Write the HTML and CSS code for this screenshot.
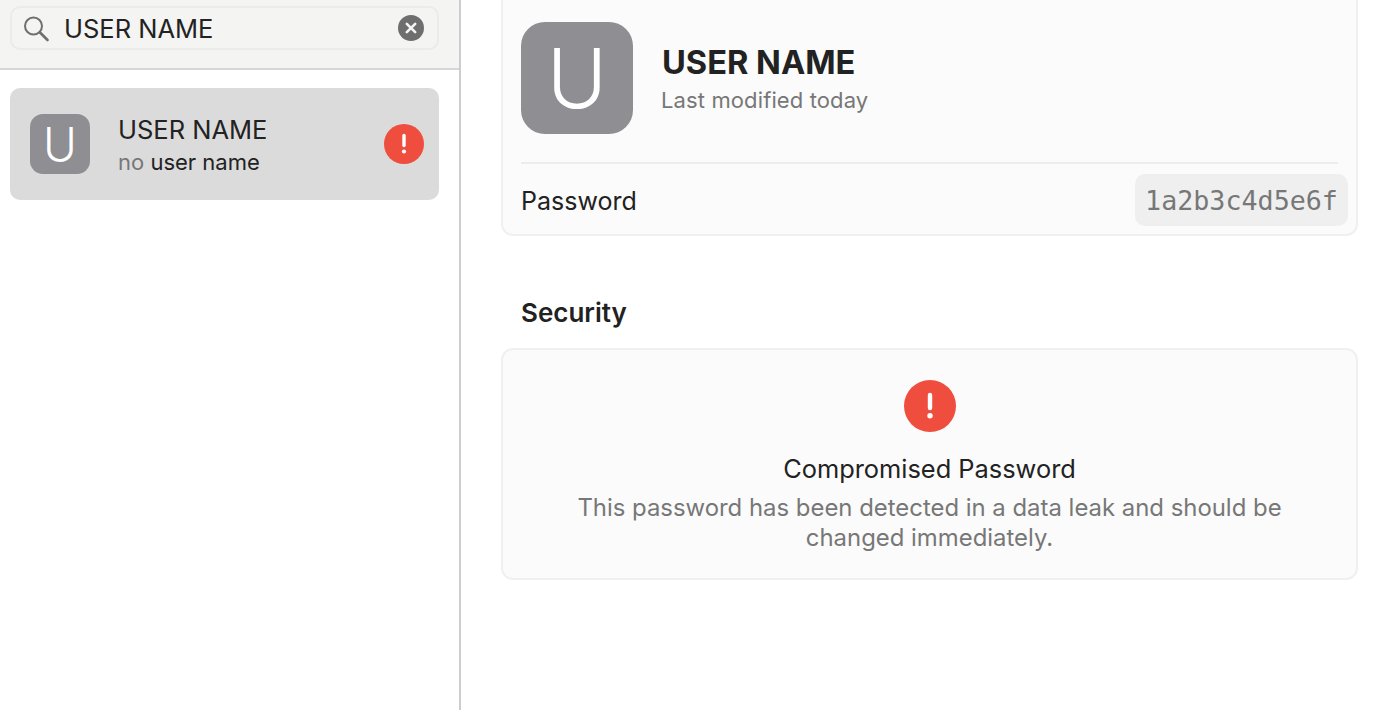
FILE: index.html
```html
<!DOCTYPE html>
<html lang="en">
<head>
  <meta charset="UTF-8" />
  <title>Passwords</title>
  <link rel="stylesheet" href="styles.css">
</head>
<body>
  <div class="app">
    <aside class="sidebar">
      <div class="search-bar">
        <div class="search-field">
          <svg class="search-icon" width="28" height="28" viewBox="0 0 28 28" fill="none" stroke="#6f6f6f" stroke-width="2">
            <circle cx="9.5" cy="12" r="8.5"/>
            <path d="M16 18.5l7.5 7.5" stroke-width="2.6" stroke-linecap="round"/>
          </svg>
          <span class="search-text">USER NAME</span>
          <svg class="clear-icon" width="26" height="26" viewBox="0 0 26 26">
            <circle cx="13" cy="13" r="13" fill="#6e6e6e"/>
            <path d="M8.8 8.8l8.4 8.4M17.2 8.8l-8.4 8.4" stroke="#f4f4f2" stroke-width="2.6" stroke-linecap="round"/>
          </svg>
        </div>
      </div>
      <div class="list">
        <div class="list-item">
          <div class="avatar avatar-small">U</div>
          <div class="item-text">
            <div class="item-title">USER NAME</div>
            <div class="item-sub"><span class="muted">no</span> user name</div>
          </div>
          <svg class="alert alert-small" viewBox="0 0 40 40">
            <circle cx="20" cy="20" r="20" fill="#ef4d3d"/>
            <path d="M20 11.5v10" stroke="#fff" stroke-width="3.4" stroke-linecap="round"/>
            <circle cx="20" cy="27.5" r="2.1" fill="#fff"/>
          </svg>
        </div>
      </div>
    </aside>
    <main class="detail">
      <section class="card card-top">
        <div class="head">
          <div class="avatar avatar-large">U</div>
          <div class="head-text">
            <h1>USER NAME</h1>
            <div class="modified">Last modified today</div>
          </div>
        </div>
        <div class="row">
          <span>Password</span>
          <code class="secret">1a2b3c4d5e6f</code>
        </div>
      </section>
      <h2>Security</h2>
      <section class="card card-security">
        <svg class="alert alert-large" viewBox="0 0 40 40">
          <circle cx="20" cy="20" r="20" fill="#ef4d3d"/>
          <path d="M20 11.5v10" stroke="#fff" stroke-width="3.4" stroke-linecap="round"/>
          <circle cx="20" cy="27.5" r="2.1" fill="#fff"/>
        </svg>
        <div class="sec-title">Compromised Password</div>
        <p>This password has been detected in a data leak and should be changed immediately.</p>
      </section>
    </main>
  </div>
</body>
</html>
```

FILE: styles.css
```css
html, body {
  margin: 0;
  height: 100%;
  overflow: hidden;
}

body {
  font-family: 'Inter', 'Noto Sans', sans-serif;
  background: #fff;
  color: #222;
}

.app {
  display: flex;
  height: 710px;
}

.sidebar {
  width: 459px;
  flex: none;
  border-right: 2px solid #cdcdcd;
}

.search-bar {
  height: 62px;
  background: #f4f4f2;
  border-bottom: 2px solid #d6d6d6;
  padding: 6px 20px 0 10px;
}

.search-field {
  height: 44px;
  box-sizing: border-box;
  border: 2px solid #ebebe9;
  border-radius: 10px;
  display: flex;
  align-items: center;
  padding: 0 13px 0 12px;
}

.search-icon {
  flex: none;
}

.search-text {
  flex: 1;
  margin-left: 12px;
  padding-top: 1px;
  font-size: 25.5px;
}

.list {
  padding: 18px 20px 0 10px;
}

.list-item {
  height: 112px;
  background: #dbdbdb;
  border-radius: 10px;
  display: flex;
  align-items: center;
  padding: 0 15px 0 20px;
}

.avatar {
  flex: none;
  background: #8e8e93;
  color: #fff;
  font-weight: 300;
  display: flex;
  align-items: center;
  justify-content: center;
}

.avatar-small {
  width: 60px;
  height: 60px;
  border-radius: 13px;
  font-size: 46px;
}

.avatar-large {
  width: 112px;
  height: 112px;
  border-radius: 24px;
  font-size: 82px;
}

.item-text {
  flex: 1;
  margin-left: 28px;
  padding-top: 2px;
}

.item-title {
  font-size: 25.5px;
  line-height: 32px;
}

.item-sub {
  font-size: 22px;
  line-height: 28px;
  margin-top: 2px;
}

.muted {
  color: #777;
}

.alert {
  flex: none;
  display: block;
}

.alert-small {
  width: 40px;
  height: 40px;
}

.alert-large {
  width: 52px;
  height: 52px;
}

.detail {
  flex: 1;
  padding: 0 20px 0 40px;
}

.card {
  background: #fbfbfb;
  border: 2px solid #f0f0f0;
  border-radius: 12px;
  box-sizing: border-box;
}

.card-top {
  height: 236px;
  border-top: 0;
  border-top-left-radius: 0;
  border-top-right-radius: 0;
  padding: 22px 8px 0 18px;
}

.head {
  display: flex;
  align-items: center;
  gap: 28px;
  padding-bottom: 28px;
  margin-right: 10px;
  border-bottom: 2px solid #ededed;
}

.head-text {
  padding-bottom: 1px;
}

h1 {
  margin: 0 0 0 1px;
  font-size: 32.6px;
  line-height: 40px;
  font-weight: 700;
}

.modified {
  font-size: 22px;
  letter-spacing: 0.12px;
  line-height: 28px;
  color: #777;
  margin-top: 4px;
}

.row {
  display: flex;
  align-items: center;
  justify-content: space-between;
  font-size: 25px;
  margin-top: 10px;
}

.row span {
  padding-top: 2px;
}

.secret {
  background: #efefef;
  border-radius: 10px;
  height: 52px;
  width: 213px;
  box-sizing: border-box;
  display: flex;
  align-items: center;
  justify-content: center;
  font-family: 'DejaVu Sans Mono', monospace;
  font-size: 26.7px;
  color: #777;
}

h2 {
  margin: 58px 0 0 20px;
  font-size: 26px;
  line-height: 38px;
  font-weight: 600;
}

.card-security {
  margin-top: 16px;
  height: 232px;
  padding-top: 30px;
  display: flex;
  flex-direction: column;
  align-items: center;
  text-align: center;
}

.sec-title {
  margin-top: 20px;
  font-size: 25.4px;
  line-height: 34px;
}

.card-security p {
  margin: 7px 0 0;
  width: 730px;
  font-size: 23.9px;
  line-height: 30px;
  color: #777;
}
```
